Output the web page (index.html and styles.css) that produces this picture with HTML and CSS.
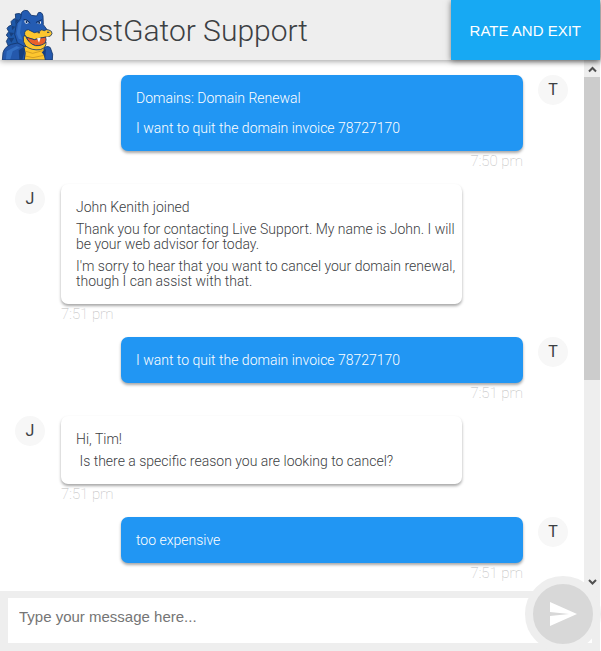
FILE: index.html
```html
<!DOCTYPE html>
<html lang="en">
<head>
<meta charset="utf-8">
<title>HostGator Support</title>
<link rel="stylesheet" href="styles.css">
</head>
<body>
<header class="header">
  <svg class="mascot" viewBox="0 0 162 180" aria-hidden="true">
    <g stroke="#12356b" stroke-width="2.5" stroke-linejoin="round">
      <path fill="#1e58a8" d="M66 44Q58 38 46 42L47 55Q38 57 33 65L35 75Q24 78 21 85L26 95 19 105 25 113 19 124 30 150 74 165 84 80Z"/>
      <path fill="#2458ac" d="M7 180 9 158Q14 140 34 133L62 127 84 146 84 180Z"/>
      <path fill="#2458ac" d="M118 180 122 148Q142 134 151 143L158 163 157 180Z"/>
      <path fill="#fdc62e" d="M73 180Q80 160 70 134L98 146 132 140Q130 162 136 180Z"/>
      <path fill="#245cb3" d="M62 55 65 37Q72 28 83 32L94 46 110 48 115 38Q126 34 129 48L130 74 142 90 139 104 114 100 91 107 82 119 76 141 52 128 44 103 49 72Z"/>
      <path fill="#fdc62e" d="M74 104Q72 90 85 89L103 98 119 94Q124 86 133 92 138 87 147 90 157 93 156 101 154 109 143 111L128 113 103 119 83 114Q75 111 74 104Z"/>
      <path fill="#e9602b" d="M78 111 103 119 127 113 138 111Q140 130 127 136 106 142 89 130Z"/>
      <path fill="#fdc62e" d="M70 109 76 107Q87 132 107 137 127 138 138 126 140 143 121 149 94 152 77 138 68 127 70 109Z"/>
    </g>
    <path fill="#3470c4" d="M55 69 66 60 60 98 67 119 56 116 50 101ZM20 154 50 138 60 143 38 154 31 178 18 178Z"/>
    <path fill="#163f7e" d="M46 57 57 60 46 72ZM35 77 46 80 36 91ZM27 97 42 99 33 110ZM26 115 43 113 34 128ZM56 151 70 142 74 154 67 179 58 179ZM125 157 138 147 136 170Z"/>
    <path fill="#f6f7f9" d="M73 62Q80 58 86 69L79 71Q73 70 73 62ZM111 69 123 64Q125 71 119 73ZM111 115 122 113 117 128ZM138 111 147 110 143 123Z"/>
    <path fill="none" stroke="#0f2d5e" stroke-width="3" stroke-linecap="round" d="M72 58Q81 57 90 68M109 67 124 60"/>
    <path fill="#0f2d5e" d="M77 63h5v6h-5zM115 66h5v5h-5zM113 97h7v3h-7zM141 95h7v3h-7z"/>
    <path fill="none" stroke="#c08a1c" stroke-width="2" d="M78 154 98 160 128 152M76 168 99 173 132 166"/>
  </svg>
  <h1 class="title">HostGator Support</h1>
  <button class="exit" type="button">RATE AND EXIT</button>
</header>
<main class="chat">
  <div class="messages">
    <article class="row visitor">
      <div class="content">
        <div class="bubble"><p>Domains: Domain Renewal</p><p>I want to quit the domain invoice 78727170</p></div>
        <time class="time">7:50 pm</time>
      </div>
      <span class="avatar">T</span>
    </article>
    <article class="row agent">
      <span class="avatar">J</span>
      <div class="content">
        <div class="bubble"><p>John Kenith joined</p><p>Thank you for contacting Live Support. My name is John. I will be your web advisor for today.</p><p>I'm sorry to hear that you want to cancel your domain renewal, though I can assist with that.</p></div>
        <time class="time">7:51 pm</time>
      </div>
    </article>
    <article class="row visitor">
      <div class="content">
        <div class="bubble"><p>I want to quit the domain invoice 78727170</p></div>
        <time class="time">7:51 pm</time>
      </div>
      <span class="avatar">T</span>
    </article>
    <article class="row agent">
      <span class="avatar">J</span>
      <div class="content">
        <div class="bubble"><p>Hi, Tim!</p><p>&nbsp;Is there a specific reason you are looking to cancel?</p></div>
        <time class="time">7:51 pm</time>
      </div>
    </article>
    <article class="row visitor">
      <div class="content">
        <div class="bubble"><p>too expensive</p></div>
        <time class="time">7:51 pm</time>
      </div>
      <span class="avatar">T</span>
    </article>
  </div>
  <div class="scrollbar" aria-hidden="true">
    <svg class="arrow" viewBox="0 0 16 17"><path d="M5 11.5 8.5 8 12 11.5"/></svg>
    <div class="track"><div class="thumb"></div></div>
    <svg class="arrow" viewBox="0 0 16 17"><path d="M5 6 8.5 9.5 12 6"/></svg>
  </div>
</main>
<form class="composer">
  <input class="message" type="text" aria-label="Message" placeholder="Type your message here...">
  <button class="send" type="button" aria-label="Send">
    <svg class="plane" viewBox="0 0 27 24" aria-hidden="true"><path d="M0 0 27 12 0 24V14L19 12 0 10Z"/></svg>
  </button>
</form>
</body>
</html>
```
FILE: styles.css
```css
* {
  box-sizing: border-box;
}

html {
  background: #fff;
}

body {
  display: flex;
  flex-direction: column;
  height: 100vh;
  margin: 0;
  padding-right: 1px;
  overflow: hidden;
  font-family: Roboto, "Liberation Sans", sans-serif;
  color: #3c4043;
}

.header {
  display: flex;
  flex: none;
  align-items: stretch;
  height: 60px;
  background: #eee;
  box-shadow: 0 1px 6px rgba(0, 0, 0, 0.4);
  position: relative;
  z-index: 1;
}

.mascot {
  flex: none;
  width: 54px;
  height: 60px;
}

.title {
  flex: 1;
  margin: 0;
  padding-left: 6px;
  font-size: 30px;
  font-weight: 300;
  line-height: 62px;
  white-space: nowrap;
}

.exit {
  padding: 0 19px;
  border: 0;
  background: #17a9f3;
  box-shadow: 0 1px 6px rgba(0, 0, 0, 0.5);
  color: #fff;
  font: 15px "Liberation Sans", sans-serif;
}

.chat {
  display: flex;
  flex: 1;
  min-height: 0;
}

.messages {
  flex: 1;
  overflow: hidden;
  padding: 15px 16px 0 15px;
}

.row {
  display: flex;
}

.visitor {
  gap: 15px;
  padding-left: 106px;
}

.agent {
  gap: 16px;
  padding-right: 106px;
}

.content {
  flex: 1;
}

.avatar {
  flex: none;
  width: 30px;
  height: 30px;
  border-radius: 50%;
  background: #f7f7f7;
  font-size: 16px;
  font-weight: 400;
  line-height: 30px;
  text-align: center;
}

.bubble {
  display: flex;
  flex-direction: column;
  padding: 16px 5px 15px 15px;
  border-radius: 7px;
  box-shadow: 0 2px 3px rgba(0, 0, 0, 0.35);
  font-size: 14px;
  font-weight: 300;
  line-height: 15px;
}

.bubble p {
  margin: 0;
}

.visitor .bubble {
  gap: 15px;
  background: #2196f3;
  color: #fff;
}

.agent .bubble {
  gap: 7px;
  background: #fff;
}

.time {
  display: block;
  height: 33px;
  color: #bbb;
  font-size: 15px;
  font-weight: 100;
  line-height: 20px;
}

.visitor .time {
  text-align: right;
}

.scrollbar {
  display: flex;
  flex: none;
  flex-direction: column;
  width: 16px;
  background: #eee;
}

.arrow {
  flex: none;
  width: 16px;
  height: 17px;
  fill: none;
  stroke: #505050;
  stroke-width: 2;
}

.track {
  flex: 1;
}

.thumb {
  height: 61%;
  background: #ccc;
}

.composer {
  position: relative;
  flex: none;
  height: 60px;
  padding: 7px 8px 8px;
  background: #eee;
}

.message {
  display: block;
  width: 100%;
  height: 45px;
  padding: 0 70px 8px 11px;
  border: 0;
  border-radius: 0;
  background: #fff;
  font: 15px "Liberation Sans", sans-serif;
}

.message::placeholder {
  color: #757575;
}

.send {
  position: absolute;
  right: -1px;
  top: -15px;
  display: flex;
  align-items: center;
  justify-content: center;
  width: 76px;
  height: 76px;
  padding: 0;
  border: 8px solid #eee;
  border-radius: 50%;
  background: #d8d8d8;
}

.plane {
  width: 27px;
  height: 24px;
  fill: #fff;
}
```
